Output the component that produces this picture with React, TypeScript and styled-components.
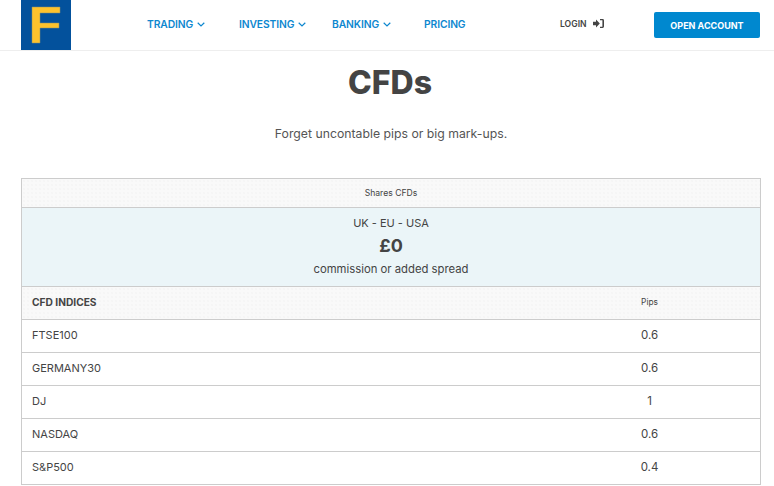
import React from "react";
import styled, { createGlobalStyle } from "styled-components";

const Global = createGlobalStyle`
  html, body { margin: 0; padding: 0; background: #fff; overflow: hidden; }
  body { font-family: Inter, "Liberation Sans", sans-serif; color: #444; }
`;

const Page = styled.div`
  width: 774px;
  height: 486px;
  overflow: hidden;
`;

const Header = styled.header`
  display: flex;
  align-items: center;
  height: 50px;
  padding-left: 21px;
  border-bottom: 1px solid #eeeeee;
`;

const Logo = styled.svg`
  width: 50px;
  height: 50px;
  flex: none;
  display: block;
`;

const Nav = styled.nav`
  display: flex;
  align-items: center;
  margin-left: 76px;
  height: 100%;
  padding-bottom: 2px;
  box-sizing: border-box;
`;

const NavItem = styled.a<{ $width: number }>`
  display: flex;
  align-items: center;
  gap: 4px;
  width: ${(p) => p.$width}px;
  font-size: 10.3px;
  font-weight: 600;
  color: #0d87cf;
  white-space: nowrap;
  letter-spacing: -0.1px;
`;

const Login = styled.a`
  display: flex;
  align-items: center;
  gap: 6px;
  margin-left: 70px;
  width: 94px;
  font-size: 8.6px;
  font-weight: 600;
  color: #444;
  margin-top: -3px;
`;

const OpenAccount = styled.a`
  display: flex;
  align-items: center;
  justify-content: center;
  width: 106px;
  height: 26px;
  background: #0088cf;
  border-radius: 2px;
  color: #fff;
  font-size: 9px;
  font-weight: 700;
  white-space: nowrap;
`;

const Title = styled.h1`
  margin: 13px 0 0;
  padding-left: 6px;
  text-align: center;
  font-size: 32px;
  line-height: 38px;
  font-weight: 800;
  color: #444;
`;

const Lead = styled.p`
  margin: 23px 0 0;
  padding-left: 8px;
  text-align: center;
  font-size: 12.25px;
  line-height: 18px;
  color: #555;
`;

const Table = styled.div`
  margin: 35px 0 0 21px;
  width: 740px;
  box-sizing: border-box;
  border: 1px solid #cccccc;
  border-bottom: 0;
`;

const dots = `
  background-color: #f9f9f9;
  background-image: radial-gradient(#f5f5f5 0.7px, transparent 0.8px);
  background-size: 4px 4px;
`;

const Caption = styled.div`
  ${dots}
  height: 28px;
  display: flex;
  align-items: center;
  justify-content: center;
  font-size: 8.6px;
  color: #444;
  border-bottom: 1px solid #cccccc;
`;

const Promo = styled.div`
  height: 79px;
  box-sizing: border-box;
  padding-top: 7px;
  background: #ebf5f8;
  border-bottom: 1px solid #cccccc;
  text-align: center;
`;

const PromoLine = styled.div<{ $wide?: boolean }>`
  font-size: ${(p) => (p.$wide ? "11.3px" : "11px")};
  line-height: 16px;
  color: #444;
`;

const PromoPrice = styled.div`
  font-size: 18px;
  line-height: 28px;
  margin: 1px 0 1px;
  font-weight: 700;
  color: #444;
`;

const Row = styled.div<{ $head?: boolean }>`
  display: grid;
  grid-template-columns: 1fr 221px;
  align-items: center;
  height: 33px;
  box-sizing: border-box;
  padding: 0 0 2px 10px;
  border-bottom: 1px solid #cccccc;
  ${(p) => (p.$head ? dots : "")}
`;

const Name = styled.div<{ $head?: boolean }>`
  font-size: ${(p) => (p.$head ? "10.2px" : "11px")};
  font-weight: ${(p) => (p.$head ? 700 : 400)};
  color: #444;
`;

const Value = styled.div<{ $head?: boolean }>`
  text-align: center;
  font-size: ${(p) => (p.$head ? "8.4px" : "11.5px")};
  color: #444;
`;

const Chevron = () => (
  <svg width="8" height="5" viewBox="0 0 8 5" fill="none">
    <path d="M0.7 0.8 L4 4 L7.3 0.8" stroke="#0d87cf" strokeWidth="1.2" />
  </svg>
);

const LoginIcon = () => (
  <svg width="11" height="9" viewBox="0 0 11 9">
    <path d="M0 2.8h3V0.6l3.8 3.9L3 8.4V6.2H0z" fill="#444" />
    <path d="M7 0h2.6A1.4 1.4 0 0 1 11 1.4v6.2A1.4 1.4 0 0 1 9.6 9H7V7.8h2.4V1.2H7z" fill="#444" />
  </svg>
);

const rows = [
  ["FTSE100", "0.6"],
  ["GERMANY30", "0.6"],
  ["DJ", "1"],
  ["NASDAQ", "0.6"],
  ["S&P500", "0.4"],
];

const nav: [string, number, boolean][] = [
  ["TRADING", 92, true],
  ["INVESTING", 93, true],
  ["BANKING", 92, true],
  ["PRICING", 66, false],
];

export default function App() {
  return (
    <Page>
      <Global />
      <Header>
        <Logo viewBox="0 0 50 50">
          <rect width="50" height="50" fill="#03519c" />
          <path d="M11 7h28v6H19v10h19v5H19v15h-8z" fill="#fdc22d" stroke="#8b8f70" strokeWidth="0.5" />
        </Logo>
        <Nav>
          {nav.map(([label, w, chev]) => (
            <NavItem key={label} $width={w}>
              {label}
              {chev && <Chevron />}
            </NavItem>
          ))}
        </Nav>
        <Login>
          LOGIN <LoginIcon />
        </Login>
        <OpenAccount>OPEN ACCOUNT</OpenAccount>
      </Header>
      <Title>CFDs</Title>
      <Lead>Forget uncontable pips or big mark-ups.</Lead>
      <Table>
        <Caption>Shares CFDs</Caption>
        <Promo>
          <PromoLine>UK - EU - USA</PromoLine>
          <PromoPrice>£0</PromoPrice>
          <PromoLine $wide>commission or added spread</PromoLine>
        </Promo>
        <Row $head>
          <Name $head>CFD INDICES</Name>
          <Value $head>Pips</Value>
        </Row>
        {rows.map(([n, v]) => (
          <Row key={n}>
            <Name>{n}</Name>
            <Value>{v}</Value>
          </Row>
        ))}
      </Table>
    </Page>
  );
}
